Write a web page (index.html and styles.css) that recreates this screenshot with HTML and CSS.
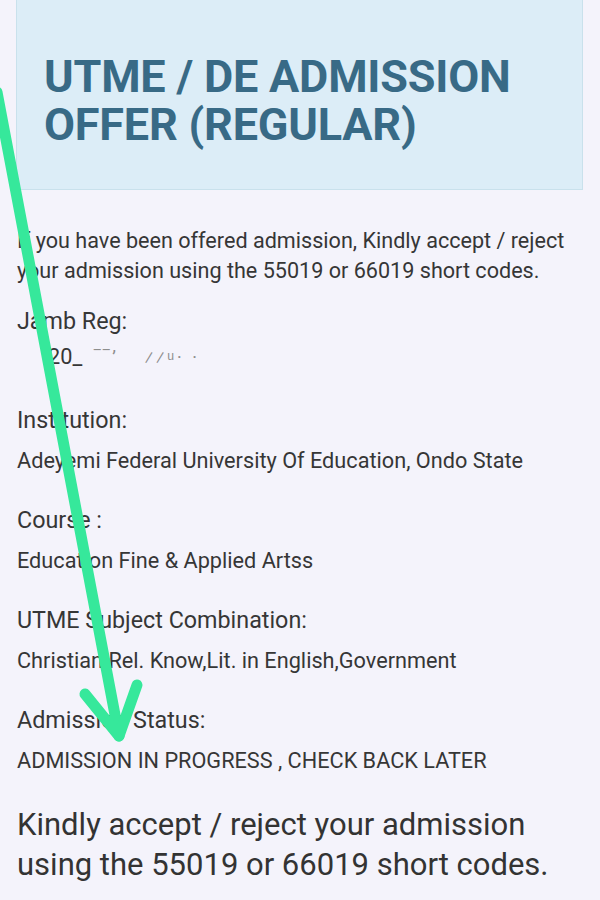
FILE: index.html
```html
<!DOCTYPE html>
<html lang="en">
<head>
  <meta charset="UTF-8">
  <meta name="viewport" content="width=device-width, initial-scale=1.0">
  <title>UTME / DE Admission Offer</title>
  <link rel="stylesheet" href="styles.css">
</head>
<body>
  <div class="page">
    <div class="banner">
      <h1>UTME / DE ADMISSION OFFER (REGULAR)</h1>
    </div>
    <p class="intro">If you have been offered admission, Kindly accept / reject your admission using the 55019 or 66019 short codes.</p>

    <div class="field first">
      <div class="label">Jamb Reg:</div>
      <div class="value reg">20_<span class="erased">‾‾ʼ</span><span class="erased wide">⁄⁄ᵘ· ·</span></div>
    </div>
    <div class="field">
      <div class="label">Institution:</div>
      <div class="value">Adeyemi Federal University Of Education, Ondo State</div>
    </div>
    <div class="field">
      <div class="label">Course :</div>
      <div class="value">Education Fine &amp; Applied Artss</div>
    </div>
    <div class="field">
      <div class="label">UTME Subject Combination:</div>
      <div class="value">Christian Rel. Know,Lit. in English,Government</div>
    </div>
    <div class="field">
      <div class="label">Admission Status:</div>
      <div class="value">ADMISSION IN PROGRESS , CHECK BACK LATER</div>
    </div>

    <p class="notice">Kindly accept / reject your admission using the 55019 or 66019 short codes.</p>

    <!-- green arrow someone drew over the screenshot -->
    <svg class="arrow" width="600" height="900" viewBox="0 0 600 900">
      <g fill="none" stroke="#36e89b" stroke-width="11" stroke-linecap="round" stroke-linejoin="round">
        <path d="M-3 92 L119 736"/>
        <path d="M85 694 L119 736 L137 685"/>
      </g>
    </svg>
  </div>
</body>
</html>
```

FILE: styles.css
```css
body { margin: 0; background: #f4f3fb; font-family: Roboto, "Liberation Sans", sans-serif; color: #363636; }
.page { position: relative; width: 600px; height: 900px; overflow: hidden; }
.banner { margin: 0 17px 0 16px; background: #dcedf7; border: 1px solid #c9e1ec; border-top: none; padding: 53px 20px 40px 27px; }
.banner h1 { margin: 0; font-size: 45px; line-height: 48px; font-weight: 700; color: #386a86; letter-spacing: -0.2px; }
.intro { margin: 36px 10px 20px 17px; font-size: 21.6px; line-height: 30px; }
.field { margin: 0 17px 29px; line-height: 30px; }
.field.first { margin-bottom: 32px; }
.label { font-size: 23.3px; }
.value { margin-top: 11px; font-size: 21.7px; }
.value.reg { margin-top: 6px; padding-left: 31px; }
.erased { color: #8d8d8d; margin-left: 12px; font-size: 18px; letter-spacing: 3px; }
.erased.wide { margin-left: 26px; }
.notice { margin: 23px 17px 0; font-size: 31px; line-height: 40px; color: #333; }
.arrow { position: absolute; top: 0; left: 0; pointer-events: none; }
```
